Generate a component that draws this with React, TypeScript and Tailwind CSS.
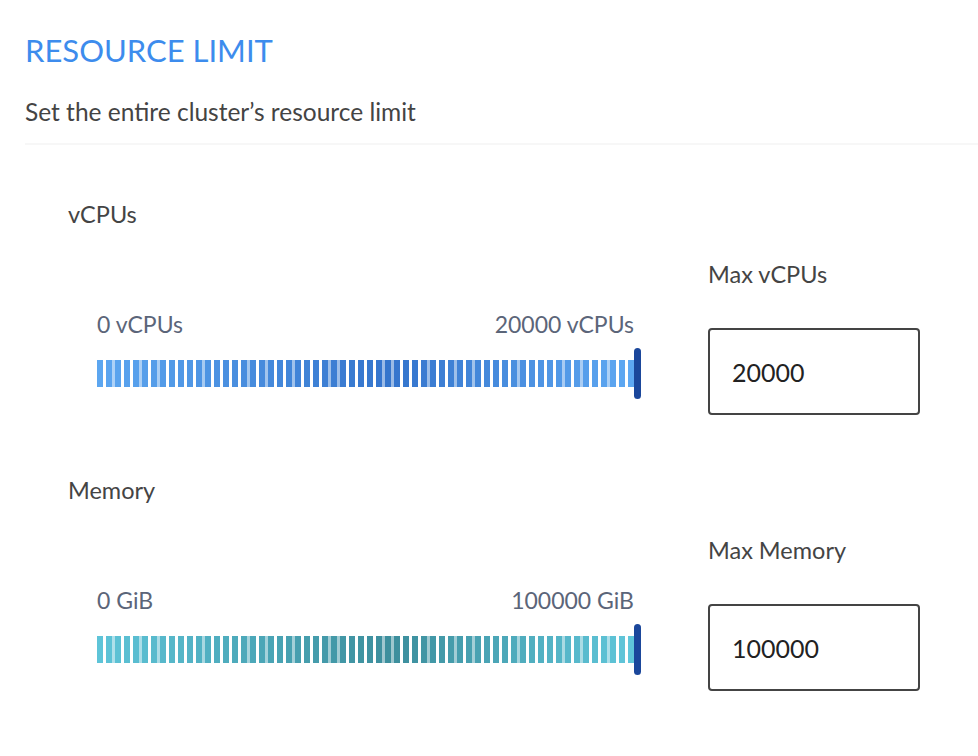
import React from "react";

type RGB = [number, number, number];

function mix(a: RGB, b: RGB, t: number): string {
  const c = a.map((v, i) => Math.round(v + (b[i] - v) * t));
  return `rgb(${c[0]},${c[1]},${c[2]})`;
}

function colorAt(stops: [number, RGB][], t: number) {
  for (let i = 0; i < stops.length - 1; i++) {
    const [p0, c0] = stops[i];
    const [p1, c1] = stops[i + 1];
    if (t <= p1) return mix(c0, c1, (t - p0) / (p1 - p0));
  }
  const last = stops[stops.length - 1][1];
  return mix(last, last, 0);
}

const CPU_STOPS: [number, RGB][] = [
  [0, [92, 166, 240]],
  [0.55, [52, 116, 204]],
  [1, [94, 168, 242]],
];

const MEM_STOPS: [number, RGB][] = [
  [0, [94, 196, 216]],
  [0.55, [60, 142, 156]],
  [1, [96, 198, 218]],
];

function StripeBar({ stops }: { stops: [number, RGB][] }) {
  const count = 60;
  return (
    <div className="flex items-center">
      <div className="flex h-[27px]">
        {Array.from({ length: count }).map((_, i) => {
          const c = colorAt(stops, i / (count - 1));
          const seam = i < count - 1 && (i % 5 === 1 || i % 7 === 4);
          return (
            <React.Fragment key={i}>
              <div className="w-[6px] h-full" style={{ backgroundColor: c }} />
              {i < count - 1 && (
                <div
                  className="w-[3px] h-full"
                  style={{ backgroundColor: seam ? c : "transparent", opacity: seam ? 0.5 : 1 }}
                />
              )}
            </React.Fragment>
          );
        })}
      </div>
      <div className="w-[7px] h-[51px] rounded-full bg-[#1b479b]" />
    </div>
  );
}

function LimitRow({
  title,
  min,
  max,
  inputLabel,
  value,
  stops,
}: {
  title: string;
  min: string;
  max: string;
  inputLabel: string;
  value: string;
  stops: [number, RGB][];
}) {
  return (
    <section>
      <div className="text-[23.5px] leading-[28px] text-[#444]">{title}</div>
      <div className="flex">
        <div className="w-[640px] pl-[29px]">
          <div className="mt-[83px] flex justify-between w-[537px] text-[23px] leading-[26px] text-[#5b6579]">
            <span>{min}</span>
            <span>{max}</span>
          </div>
          <div className="mt-[11px]">
            <StripeBar stops={stops} />
          </div>
        </div>
        <div className="pt-[32px]">
          <div className="text-[23.5px] leading-[28px] text-[#444]">{inputLabel}</div>
          <input
            readOnly
            value={value}
            className="mt-[40px] w-[212px] h-[87px] border-2 border-[#444] rounded-[4px] px-[22px] text-[25px] text-[#222] outline-none"
          />
        </div>
      </div>
    </section>
  );
}

export default function App() {
  return (
    <div
      className="min-h-screen bg-white pl-[25px] pt-[30px]"
      style={{ fontFamily: "Lato, 'Noto Sans', sans-serif" }}
    >
      <h1 className="text-[31px] leading-[40px] text-[#3d8ced]">RESOURCE LIMIT</h1>
      <p className="mt-[27px] text-[24.5px] leading-[30px] text-[#444]">
        Set the entire cluster’s resource limit
      </p>
      <div className="mt-[16px] border-t-2 border-[#f7f7f7] pl-[43px] pt-[55px]">
        <LimitRow
          title="vCPUs"
          min="0 vCPUs"
          max="20000 vCPUs"
          inputLabel="Max vCPUs"
          value="20000"
          stops={CPU_STOPS}
        />
        <div className="mt-[61px]">
          <LimitRow
            title="Memory"
            min="0 GiB"
            max="100000 GiB"
            inputLabel="Max Memory"
            value="100000"
            stops={MEM_STOPS}
          />
        </div>
      </div>
    </div>
  );
}
